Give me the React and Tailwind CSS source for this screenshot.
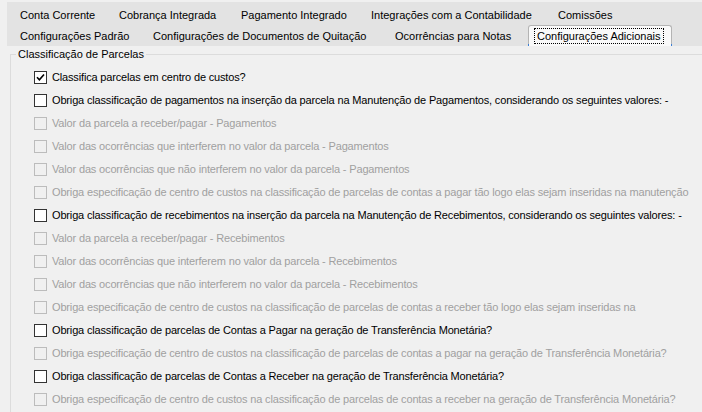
import React from "react";

const font = { fontFamily: '"Liberation Sans", Arial, sans-serif' };

const tabRow1 = [
  { label: "Conta Corrente", w: "w-[99px]" },
  { label: "Cobrança Integrada", w: "w-[122px]" },
  { label: "Pagamento Integrado", w: "w-[130px]" },
  { label: "Integrações com a Contabilidade", w: "w-[187px]" },
  { label: "Comissões", w: "w-[90px]" },
];

const tabRow2 = [
  { label: "Configurações Padrão", w: "w-[133px]" },
  { label: "Configurações de Documentos de Quitação", w: "w-[242px]" },
  { label: "Ocorrências para Notas", w: "w-[140px]" },
];

const options = [
  { text: "Classifica parcelas em centro de custos?", checked: true },
  { text: "Obriga classificação de pagamentos na inserção da parcela na Manutenção de Pagamentos, considerando os seguintes valores: -" },
  { text: "Valor da parcela a receber/pagar - Pagamentos", disabled: true },
  { text: "Valor das ocorrências que interferem no valor da parcela - Pagamentos", disabled: true },
  { text: "Valor das ocorrências que não interferem no valor da parcela - Pagamentos", disabled: true },
  { text: "Obriga especificação de centro de custos na classificação de parcelas de contas a pagar tão logo elas sejam inseridas na manutenção", disabled: true },
  { text: "Obriga classificação de recebimentos na inserção da parcela na Manutenção de Recebimentos, considerando os seguintes valores: -" },
  { text: "Valor da parcela a receber/pagar - Recebimentos", disabled: true },
  { text: "Valor das ocorrências que interferem no valor da parcela - Recebimentos", disabled: true },
  { text: "Valor das ocorrências que não interferem no valor da parcela - Recebimentos", disabled: true },
  { text: "Obriga especificação de centro de custos na classificação de parcelas de contas a receber tão logo elas sejam inseridas na", disabled: true },
  { text: "Obriga classificação de parcelas de Contas a Pagar na geração de Transferência Monetária?" },
  { text: "Obriga especificação de centro de custos na classificação de parcelas de contas a pagar na geração de Transferência Monetária?", disabled: true },
  { text: "Obriga classificação de parcelas de Contas a Receber na geração de Transferência Monetária?" },
  { text: "Obriga especificação de centro de custos na classificação de parcelas de contas a receber na geração de Transferência Monetária?", disabled: true },
];

const CheckBox = ({ checked, disabled }) => (
  <div
    className={
      "w-[13px] h-[13px] shrink-0 border flex items-center justify-center " +
      (disabled ? "border-[#bcbcbc] bg-[#f0f0f0]" : "border-[#333333] bg-white")
    }
  >
    {checked && (
      <svg width="9" height="9" viewBox="0 0 9 9">
        <path d="M1 4.2 L3.4 6.8 L8 1.4" fill="none" stroke="#000" strokeWidth="1.6" />
      </svg>
    )}
  </div>
);

const Tab = ({ label, w }) => (
  <div className={`${w} h-[21px] flex items-center pl-[7px] whitespace-nowrap`}>{label}</div>
);

export default function App() {
  return (
    <div className="w-[702px] h-[412px] bg-[#f0f0f0] text-[11px] text-black overflow-hidden pt-[2px]" style={font}>
      {/* tab strip */}
      <div className="ml-[7px] h-[44px] bg-[#e3e3e3] flex flex-col pt-[3px]">
        <div className="flex pl-[6px] h-[21px]">
          {tabRow1.map((t) => (
            <Tab key={t.label} {...t} />
          ))}
        </div>
        <div className="flex pl-[6px] h-[20px]">
          {tabRow2.map((t) => (
            <Tab key={t.label} {...t} />
          ))}
          <div className="relative w-[144px] h-[21px] -mt-[1px] bg-[#f9f9f9] border border-b-0 border-[#b4b4b4] rounded-t-[3px] flex items-center pl-[5px] z-10">
            <span className="px-[2px] py-[1px] border border-dotted border-black leading-[12px] whitespace-nowrap">
              Configurações Adicionais
            </span>
            <span className="absolute left-[-1px] bottom-0 w-px h-[2px] bg-[#3c7fd6]" />
            <span className="absolute right-[-1px] bottom-0 w-px h-[2px] bg-[#3c7fd6]" />
          </div>
        </div>
      </div>

      {/* page content */}
      <div className="pl-[10px] pt-[2px]">
        <div className="relative border-t border-l border-[#dcdcdc] mt-[6px] h-[400px]">
          <div className="absolute -top-[8px] left-[5px] bg-[#f0f0f0] px-[2px] leading-[14px]">
            Classificação de Parcelas
          </div>
          <div className="flex flex-col pt-[11px] pl-[23px] tracking-[-0.16px]">
            {options.map((o, i) => (
              <div key={i} className="h-[23px] flex items-center gap-[5px] whitespace-nowrap">
                <CheckBox checked={o.checked} disabled={o.disabled} />
                <span className={o.disabled ? "text-[#a0a0a0]" : "text-black"}>{o.text}</span>
              </div>
            ))}
          </div>
        </div>
      </div>
    </div>
  );
}
